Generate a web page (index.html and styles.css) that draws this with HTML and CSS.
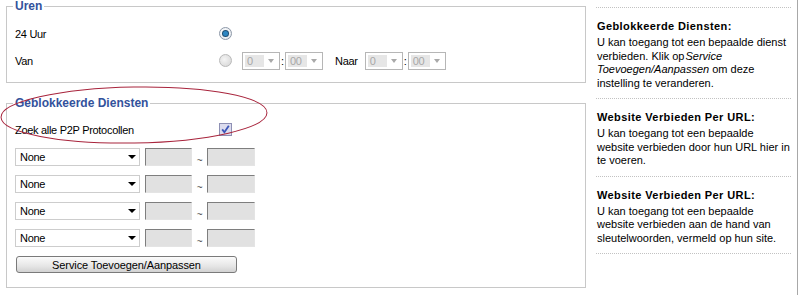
FILE: index.html
```html
<!DOCTYPE html>
<html lang="nl">
<head>
    <meta charset="UTF-8">
    <title>Geblokkeerde Diensten</title>
    <link rel="stylesheet" href="styles.css">
</head>
<body>
    <div class="page">
        <!-- Left: settings -->
        <div class="main">
            <fieldset class="group hours">
                <legend>Uren</legend>
                <div class="row">
                    <span class="label">24 Uur</span>
                    <span class="radio checked"></span>
                </div>
                <div class="row">
                    <span class="label">Van</span>
                    <span class="radio"></span>
                    <span class="pick">
                        <span class="pick-value">0</span>
                        <span class="pick-arrow"></span>
                    </span>
                    <span class="colon">:</span>
                    <span class="pick">
                        <span class="pick-value">00</span>
                        <span class="pick-arrow"></span>
                    </span>
                    <span class="to">Naar</span>
                    <span class="pick">
                        <span class="pick-value">0</span>
                        <span class="pick-arrow"></span>
                    </span>
                    <span class="colon">:</span>
                    <span class="pick">
                        <span class="pick-value">00</span>
                        <span class="pick-arrow"></span>
                    </span>
                </div>
            </fieldset>

            <fieldset class="group services">
                <legend>Geblokkeerde Diensten</legend>
                <div class="row p2p">
                    <span class="label">Zoek alle P2P Protocollen</span>
                    <span class="check">
                        <svg width="13" height="13" viewBox="0 0 13 13">
                            <rect x="0.5" y="0.5" width="12" height="12" fill="#dcdcee" stroke="#8e90b4"/>
                            <path d="M3.2 6.4 L5.4 9.2 L9.8 2.8" fill="none" stroke="#3b55b8" stroke-width="1.8"/>
                        </svg>
                    </span>
                </div>
                <div class="row service">
                    <span class="combo">None<span class="combo-arrow"></span></span>
                    <span class="port"></span>
                    <span class="tilde">~</span>
                    <span class="port"></span>
                </div>
                <div class="row service">
                    <span class="combo">None<span class="combo-arrow"></span></span>
                    <span class="port"></span>
                    <span class="tilde">~</span>
                    <span class="port"></span>
                </div>
                <div class="row service">
                    <span class="combo">None<span class="combo-arrow"></span></span>
                    <span class="port"></span>
                    <span class="tilde">~</span>
                    <span class="port"></span>
                </div>
                <div class="row service">
                    <span class="combo">None<span class="combo-arrow"></span></span>
                    <span class="port"></span>
                    <span class="tilde">~</span>
                    <span class="port"></span>
                </div>
                <button class="btn">Service Toevoegen/Aanpassen</button>
            </fieldset>

            <!-- hand drawn marker around the services legend -->
            <svg class="marker" width="280" height="150" viewBox="0 0 280 150">
                <ellipse cx="134" cy="115" rx="133" ry="28" transform="rotate(-1 134 115)" fill="none" stroke="#a8243c" stroke-width="1"/>
            </svg>
        </div>

        <!-- Right: help -->
        <div class="help">
            <div class="help-item">
                <h3>Geblokkeerde Diensten:</h3>
                <p>U kan toegang tot een bepaalde dienst verbieden. Klik op<em>Service Toevoegen/Aanpassen</em> om deze instelling te veranderen.</p>
            </div>
            <div class="help-item">
                <h3>Website Verbieden Per URL:</h3>
                <p>U kan toegang tot een bepaalde website verbieden door hun URL hier in te voeren.</p>
            </div>
            <div class="help-item">
                <h3>Website Verbieden Per URL:</h3>
                <p>U kan toegang tot een bepaalde website verbieden aan de hand van sleutelwoorden, vermeld op hun site.</p>
            </div>
        </div>
    </div>
</body>
</html>
```

FILE: styles.css
```css
body {
    margin: 0;
    background: #fff;
    font-family: "Liberation Sans", Arial, sans-serif;
    font-size: 11px;
    color: #000;
}
.page {
    display: flex;
    align-items: flex-start;
}
.main {
    position: relative;
    width: 580px;
    margin-left: 6px;
}
.group {
    margin: 0;
    padding: 0 8px;
    border: 1px solid #c8c8c8;
}
.group legend {
    padding: 0 2px;
    margin-left: -2px;
    font-size: 12px;
    line-height: 13px;
    font-weight: bold;
    color: #33529c;
}
.hours {
    padding-top: 7px;
    padding-bottom: 8px;
}
.services {
    margin-top: 14px;
    padding-top: 7px;
    padding-bottom: 14px;
}
.row {
    display: flex;
    align-items: center;
    height: 27px;
    letter-spacing: -0.3px;
}
.row.p2p {
    height: 26px;
}
.label {
    width: 204px;
}

/* radio buttons */
.radio {
    box-sizing: border-box;
    width: 13px;
    height: 13px;
    border-radius: 50%;
    border: 1px solid #b9b9b9;
    background: radial-gradient(circle at 40% 40%, #f4f4f4, #d4d4d4);
    display: flex;
    align-items: center;
    justify-content: center;
}
.radio.checked {
    border-color: #8d98a8;
    background: radial-gradient(circle at 40% 40%, #ffffff, #dde3ea);
}
.radio.checked::after {
    content: "";
    width: 5px;
    height: 5px;
    border-radius: 50%;
    background: #2d86c2;
    box-shadow: 0 0 0 1px #1d4e74;
}
.hours .radio {
    margin-right: 10px;
}

/* disabled time pickers */
.pick {
    box-sizing: border-box;
    display: flex;
    align-items: center;
    width: 38px;
    height: 18px;
    border: 1px solid #b6b6b6;
    background: #fff;
    padding: 0 2px;
}
.pick-value {
    flex: 1;
    height: 12px;
    line-height: 12px;
    padding-left: 2px;
    margin-right: 4px;
    background: #e6e6e6;
    color: #a8a8a8;
}
.pick-arrow {
    width: 0;
    height: 0;
    margin-right: 3px;
    border-left: 3.5px solid transparent;
    border-right: 3.5px solid transparent;
    border-top: 4px solid #a9a9a9;
}
.colon {
    width: 5px;
    text-align: center;
}
.to {
    margin: 0 7px 0 12px;
}

/* service rows */
.combo {
    box-sizing: border-box;
    display: flex;
    align-items: center;
    justify-content: space-between;
    width: 125px;
    height: 18px;
    padding: 0 3px 0 4px;
    border: 1px solid #cdcdcd;
    background: #fff;
    margin-right: 5px;
}
.combo-arrow {
    width: 0;
    height: 0;
    border-left: 4px solid transparent;
    border-right: 4px solid transparent;
    border-top: 4px solid #000;
}
.port {
    box-sizing: border-box;
    width: 47px;
    height: 18px;
    background: #e1e1e1;
    border: 1px solid;
    border-color: #7e7e7e #e4e4e4 #e4e4e4 #7e7e7e;
}
.port:last-child {
    width: 48px;
}
.tilde {
    width: 15px;
    text-align: center;
    padding-top: 8px;
    font-size: 10px;
    color: #555;
}
.btn {
    display: block;
    margin: 5px 0 0 1px;
    width: 221px;
    height: 17px;
    padding: 0;
    border: 1px solid #7a7a7a;
    border-radius: 3px;
    background: linear-gradient(#fbfbfb, #e6e6e6 60%, #d2d2d2);
    font-family: "Liberation Sans", Arial, sans-serif;
    font-size: 11px;
    color: #000;
    letter-spacing: -0.1px;
}
.marker {
    position: absolute;
    left: -6px;
    top: 0;
    pointer-events: none;
}

/* help panel */
.help {
    width: 195px;
    margin-left: 4px;
    padding: 7px 6px 0 6px;
    border-right: 1px solid #a8a8a8;
    min-height: 288px;
}
.help-item {
    border-top: 1px dotted #c2c2c2;
    padding: 11px 0 8px 1px;
}
.help-item:last-child {
    border-bottom: 1px dotted #c2c2c2;
}
.help-item h3 {
    margin: 0 0 3px 0;
    font-size: 11px;
    line-height: 14px;
    letter-spacing: 0.4px;
}
.help-item p {
    margin: 0;
    line-height: 13.5px;
}
.help-item em {
    padding-left: 1px;
}
```
